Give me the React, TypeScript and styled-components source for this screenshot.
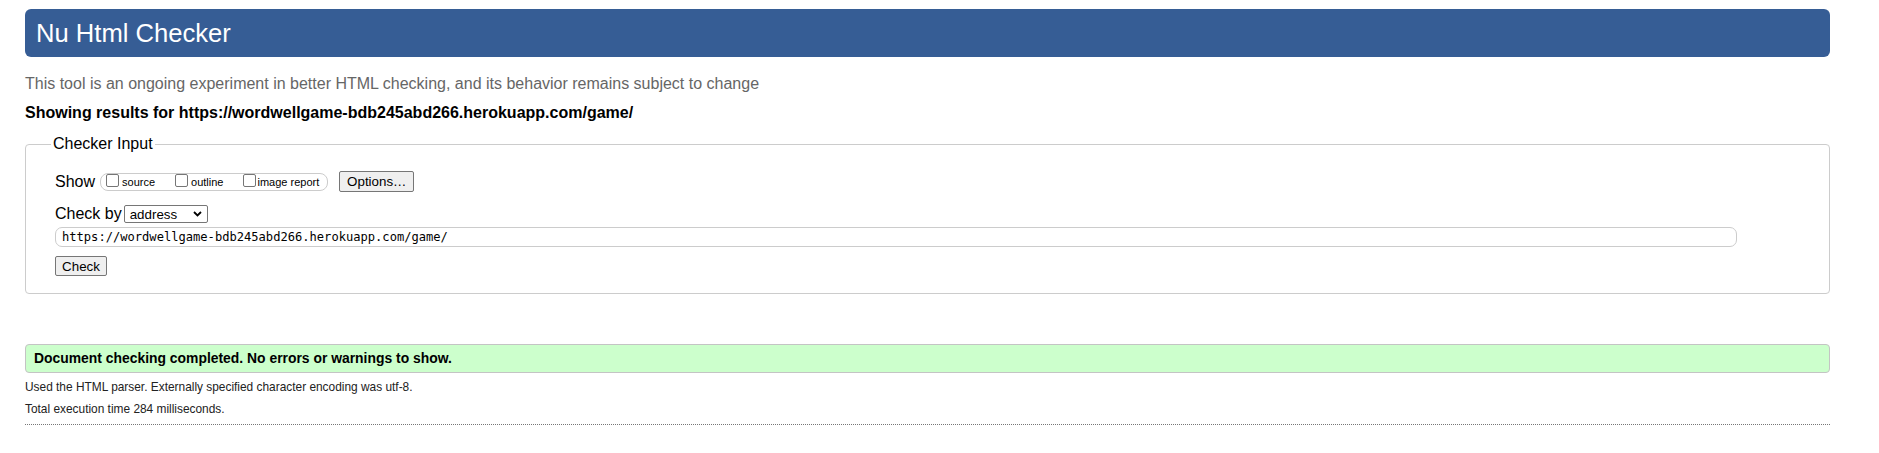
import React from "react";
import styled, { createGlobalStyle } from "styled-components";

const GlobalStyle = createGlobalStyle`
  html, body {
    margin: 0;
    padding: 0;
    background: #fff;
  }
  body {
    font-family: "Liberation Sans", Arial, sans-serif;
    color: #000;
  }
`;

const Page = styled.div`
  padding: 9px 49px 20px 25px;
`;

const Title = styled.h1`
  margin: 0;
  height: 48px;
  line-height: 48px;
  padding: 0 11px;
  background: #365d95;
  color: #fff;
  border-radius: 6px;
  font-size: 25.6px;
  font-weight: normal;
`;

const Intro = styled.p`
  margin: 18px 0 0;
  font-size: 16px;
  line-height: 18px;
  color: #666;
`;

const ResultFor = styled.p`
  margin: 11px 0 0;
  font-size: 16px;
  line-height: 18px;
  font-weight: bold;
`;

const InputSet = styled.fieldset`
  margin: 13px 0 0;
  padding: 0 29px 17px 29px;
  border: 1px solid #ccc;
  border-radius: 4px;
`;

const Legend = styled.legend`
  margin-left: -4px;
  padding: 0 2px;
  font-size: 16px;
  line-height: 18px;
`;

const Row = styled.div<{ $top: number; $h: number }>`
  display: flex;
  align-items: center;
  gap: 2px;
  margin-top: ${(p) => p.$top}px;
  height: ${(p) => p.$h}px;
  font-size: 16px;
`;

const ShowGroup = styled.span`
  display: inline-flex;
  align-items: center;
  gap: 17px;
  height: 16px;
  margin: 0 9px 0 3px;
  padding: 0 8px 0 2px;
  border: 1px solid #ccc;
  border-radius: 8px;
`;

const ShowItem = styled.label`
  display: inline-flex;
  align-items: center;
  font-size: 11px;
  line-height: 13px;
  padding-top: 2px;
`;

const Box = styled.input.attrs({ type: "checkbox" })`
  appearance: none;
  box-sizing: border-box;
  width: 13px;
  height: 13px;
  margin: 0 3px 0 3px;
  border: 1px solid #767676;
  border-radius: 2px;
  background: #fff;
  position: relative;
  top: -2px;
`;

const Button = styled.button<{ $w: number; $h: number }>`
  box-sizing: border-box;
  width: ${(p) => p.$w}px;
  height: ${(p) => p.$h}px;
  padding: 0 6px;
  border: 1px solid #767676;
  border-radius: 2px;
  background: #efefef;
  font-family: "Liberation Sans", Arial, sans-serif;
  font-size: 13.33px;
  color: #000;
`;

const SelectBox = styled.span`
  box-sizing: border-box;
  display: inline-flex;
  align-items: center;
  justify-content: space-between;
  width: 84px;
  height: 18px;
  padding: 0 5px 0 5px;
  border: 1px solid #767676;
  border-radius: 2px;
  font-size: 13.33px;
  background: #fff;
`;

const UrlField = styled.input`
  box-sizing: border-box;
  width: 1682px;
  height: 20px;
  margin: 0;
  padding: 0 6px;
  border: 1px solid #ccc;
  border-radius: 7px;
  font-family: "DejaVu Sans Mono", "Liberation Mono", monospace;
  font-size: 12.1px;
  color: #000;
  outline: none;
`;

const Success = styled.div`
  box-sizing: border-box;
  margin-top: 50px;
  height: 29px;
  line-height: 27px;
  padding: 0 8px;
  background: #ccffcc;
  border: 1px solid #c4c4c4;
  border-radius: 4px;
  font-size: 13.9px;
  font-weight: bold;
`;

const Detail = styled.p<{ $top: number }>`
  margin: ${(p) => p.$top}px 0 0;
  font-size: 11.9px;
  line-height: 14px;
  color: #222;
`;

const Rule = styled.hr`
  margin: 8px 0 0;
  border: 0;
  border-top: 1px dotted #777;
  height: 0;
`;

const Chevron = () => (
  <svg width="9" height="6" viewBox="0 0 9 6">
    <path d="M1 1 L4.5 4.5 L8 1" fill="none" stroke="#000" strokeWidth="1.8" />
  </svg>
);

const url = "https://wordwellgame-bdb245abd266.herokuapp.com/game/";

export default function App() {
  return (
    <>
      <GlobalStyle />
      <Page>
        <Title>Nu Html Checker</Title>
        <Intro>
          This tool is an ongoing experiment in better HTML checking, and its
          behavior remains subject to change
        </Intro>
        <ResultFor>Showing results for {url}</ResultFor>
        <InputSet>
          <Legend>Checker Input</Legend>
          <Row $top={18} $h={21}>
            <span>Show</span>
            <ShowGroup>
              <ShowItem>
                <Box />
                source
              </ShowItem>
              <ShowItem>
                <Box />
                outline
              </ShowItem>
              <ShowItem>
                <Box style={{ marginRight: 1 }} />
                image report
              </ShowItem>
            </ShowGroup>
            <Button $w={75} $h={21}>Options…</Button>
          </Row>
          <Row $top={13} $h={18}>
            <span>Check by</span>
            <SelectBox>
              address
              <Chevron />
            </SelectBox>
          </Row>
          <Row $top={4} $h={20}>
            <UrlField defaultValue={url} readOnly />
          </Row>
          <Row $top={9} $h={20}>
            <Button $w={52} $h={20}>Check</Button>
          </Row>
        </InputSet>
        <Success>
          Document checking completed. No errors or warnings to show.
        </Success>
        <Detail $top={7}>
          Used the HTML parser. Externally specified character encoding was
          utf-8.
        </Detail>
        <Detail $top={8}>Total execution time 284 milliseconds.</Detail>
        <Rule />
      </Page>
    </>
  );
}
